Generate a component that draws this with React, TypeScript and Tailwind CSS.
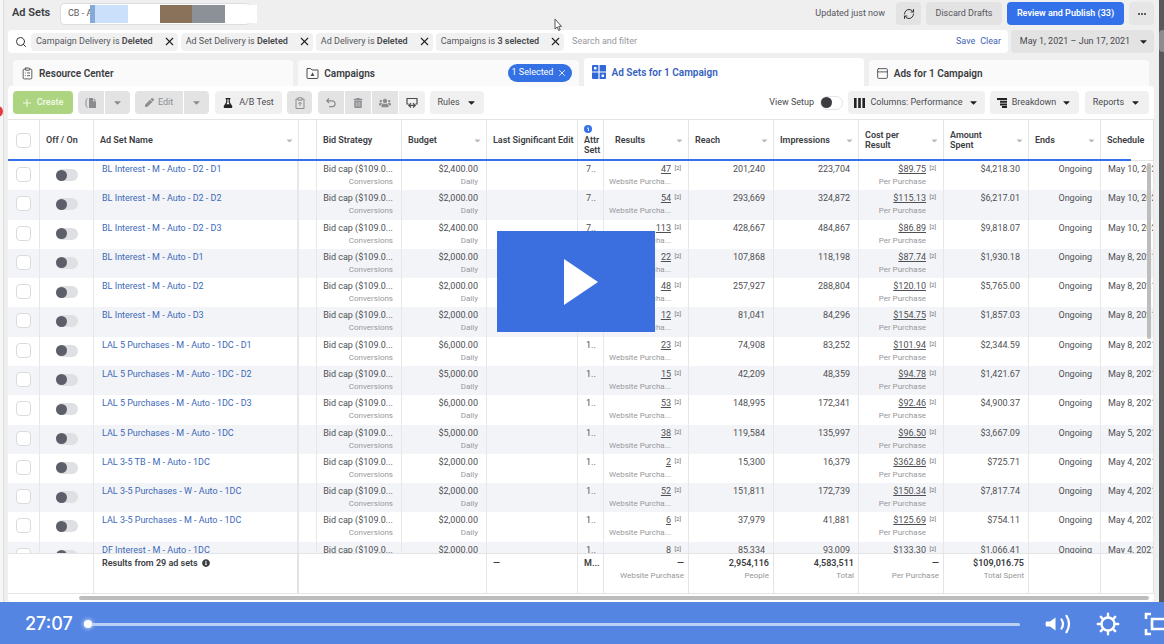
import { useState } from "react"
import type { ReactNode } from "react"
import { ClipboardList, PanelTop, RefreshCw, Search, X } from "lucide-react"
import { FaCaretDown, FaFlask, FaInfoCircle, FaPen, FaTrashAlt, FaUsers } from "react-icons/fa"

type Row = {
  name: string
  budget: string
  attr: string
  results: string
  reach: string
  impressions: string
  cost: string
  spent: string
  schedule: string
}

const rows: Row[] = [
  { name: "BL Interest - M - Auto - D2 - D1", budget: "$2,400.00", attr: "7..", results: "47", reach: "201,240", impressions: "223,704", cost: "$89.75", spent: "$4,218.30", schedule: "May 10, 2021" },
  { name: "BL Interest - M - Auto - D2 - D2", budget: "$2,000.00", attr: "7..", results: "54", reach: "293,669", impressions: "324,872", cost: "$115.13", spent: "$6,217.01", schedule: "May 10, 2021" },
  { name: "BL Interest - M - Auto - D2 - D3", budget: "$2,400.00", attr: "7..", results: "113", reach: "428,667", impressions: "484,867", cost: "$86.89", spent: "$9,818.07", schedule: "May 10, 2021" },
  { name: "BL Interest - M - Auto - D1", budget: "$2,000.00", attr: "7..", results: "22", reach: "107,868", impressions: "118,198", cost: "$87.74", spent: "$1,930.18", schedule: "May 8, 2021" },
  { name: "BL Interest - M - Auto - D2", budget: "$2,000.00", attr: "7..", results: "48", reach: "257,927", impressions: "288,804", cost: "$120.10", spent: "$5,765.00", schedule: "May 8, 2021" },
  { name: "BL Interest - M - Auto - D3", budget: "$2,000.00", attr: "7..", results: "12", reach: "81,041", impressions: "84,296", cost: "$154.75", spent: "$1,857.03", schedule: "May 8, 2021" },
  { name: "LAL 5 Purchases - M - Auto - 1DC - D1", budget: "$6,000.00", attr: "1..", results: "23", reach: "74,908", impressions: "83,252", cost: "$101.94", spent: "$2,344.59", schedule: "May 8, 2021" },
  { name: "LAL 5 Purchases - M - Auto - 1DC - D2", budget: "$5,000.00", attr: "1..", results: "15", reach: "42,209", impressions: "48,359", cost: "$94.78", spent: "$1,421.67", schedule: "May 8, 2021" },
  { name: "LAL 5 Purchases - M - Auto - 1DC - D3", budget: "$6,000.00", attr: "1..", results: "53", reach: "148,995", impressions: "172,341", cost: "$92.46", spent: "$4,900.37", schedule: "May 8, 2021" },
  { name: "LAL 5 Purchases - M - Auto - 1DC", budget: "$5,000.00", attr: "1..", results: "38", reach: "119,584", impressions: "135,997", cost: "$96.50", spent: "$3,667.09", schedule: "May 5, 2021" },
  { name: "LAL 3-5 TB - M - Auto - 1DC", budget: "$2,000.00", attr: "1..", results: "2", reach: "15,300", impressions: "16,379", cost: "$362.86", spent: "$725.71", schedule: "May 4, 2021" },
  { name: "LAL 3-5 Purchases - W - Auto - 1DC", budget: "$2,000.00", attr: "1..", results: "52", reach: "151,811", impressions: "172,739", cost: "$150.34", spent: "$7,817.74", schedule: "May 4, 2021" },
  { name: "LAL 3-5 Purchases - M - Auto - 1DC", budget: "$2,000.00", attr: "1..", results: "6", reach: "37,979", impressions: "41,881", cost: "$125.69", spent: "$754.11", schedule: "May 4, 2021" },
  { name: "DF Interest - M - Auto - 1DC", budget: "$2,000.00", attr: "1..", results: "8", reach: "85,334", impressions: "93,009", cost: "$133.30", spent: "$1,066.41", schedule: "May 4, 2021" },
]

const chips = [
  { label: "Campaign Delivery is", value: "Deleted" },
  { label: "Ad Set Delivery is", value: "Deleted" },
  { label: "Ad Delivery is", value: "Deleted" },
  { label: "Campaigns is", value: "3 selected" },
]

const btn = "flex h-[23px] items-center justify-center bg-[#f0f0f1] text-[#4b4c4f]"
const btnOff = "flex h-[23px] items-center justify-center bg-[#e3e3e4] text-[#8b8c8f]"

function TopBar() {
  return (
    <header className="flex h-[26px] items-center pt-px">
      <h1 className="ml-1 w-12 text-[11px] font-semibold text-[#3b3c3f]">Ad Sets</h1>
      <button className="flex h-[22px] w-[190px] items-center rounded border border-[#dcdde0] bg-white pl-[7px]">
        <span className="w-[22px] shrink-0 overflow-hidden whitespace-nowrap text-left text-[9px] text-[#5c5d60]">CB - A</span>
        <span className="flex h-[18px] shrink-0">
          <span className="w-[5px] bg-[#85aad8]" />
          <span className="w-[33px] bg-[#cbe1fb]" />
          <span className="w-8 bg-white" />
          <span className="w-8 bg-[#8a7159]" />
          <span className="w-[33px] bg-[#8c9197]" />
          <span className="w-8 bg-white" />
        </span>
      </button>
      <div className="ml-auto flex items-center gap-[5px] text-[9px]">
        <span className="mr-1.5 text-[#55565a]">Updated just now</span>
        <button aria-label="Refresh" className="flex h-[23px] w-[25px] items-center justify-center rounded bg-[#e3e3e4] text-[#333]">
          <RefreshCw size={12} />
        </button>
        <button className="h-[23px] w-[76px] rounded bg-[#e3e3e4] text-[#55565a]">Discard Drafts</button>
        <button className="h-[23px] w-[117px] rounded bg-[#3371eb] font-semibold text-white">
          Review and Publish (33)
        </button>
        <button aria-label="More" className="flex h-[23px] w-[25px] items-center justify-center gap-px rounded bg-[#e6e6e7]">
          <span className="size-0.5 rounded-full bg-[#333]" />
          <span className="size-0.5 rounded-full bg-[#333]" />
          <span className="size-0.5 rounded-full bg-[#333]" />
        </button>
      </div>
    </header>
  )
}

function FilterBar() {
  return (
    <div className="mt-1 flex gap-[3px]">
      <div className="flex h-[23px] flex-1 items-center rounded bg-white">
        <Search size={12} className="ml-[7px] mr-1 text-[#333]" />
        <div className="flex gap-[3px]">
          {chips.map((chip) => (
            <span key={chip.label} className="flex h-[18px] items-center rounded bg-[#f1f1f2] pl-[5px] pr-0.5 text-[9px] text-[#55565a]">
              <span className="whitespace-nowrap">
                {chip.label} <b className="font-semibold text-[#47484b]">{chip.value}</b>
              </span>
              <button aria-label={`Remove ${chip.label}`} className="ml-2.5 text-[#222]">
                <X size={13} />
              </button>
            </span>
          ))}
        </div>
        <input
          aria-label="Search and filter"
          placeholder="Search and filter"
          className="ml-2 min-w-0 flex-1 text-[9px] outline-none placeholder:text-[#97989b]"
        />
        <button className="text-[9px] text-[#3f63b5]">Save</button>
        <button className="ml-[5px] mr-[7px] text-[9px] text-[#3f63b5]">Clear</button>
      </div>
      <button className="flex h-[23px] w-[143px] items-center justify-center gap-2 rounded bg-[#e3e3e4] pl-1 text-[9px] text-[#47484b]">
        May 1, 2021 – Jun 17, 2021
        <FaCaretDown size={11} className="text-[#222]" />
      </button>
    </div>
  )
}

function Tabs() {
  const tab = "flex h-[26px] flex-1 items-center rounded-t bg-[#fafafa] text-[10px] font-semibold text-[#3b3c3f]"
  return (
    <nav className="mt-[5px] flex items-end gap-[5px] px-[5px]">
      <a href="#resources" className={tab}>
        <ClipboardList size={13} strokeWidth={1.5} className="ml-2 mr-[5px]" />
        Resource Center
      </a>
      <div className={tab}>
        <a href="#campaigns" className="flex items-center">
          <svg viewBox="0 0 13 12" className="ml-2 mr-[5px] h-3 w-[13px]" fill="none" stroke="#4b4c4f">
            <path d="M1 10.5V1.5h3.6L6 3h6v7.5a1 1 0 0 1-1 1H2a1 1 0 0 1-1-1z" />
            <path d="M6.5 5.2 8.4 9H4.6z" fill="#4b4c4f" stroke="none" />
          </svg>
          Campaigns
        </a>
        <button className="ml-auto mr-[7px] flex h-[18px] w-16 items-center justify-center gap-1 rounded-full bg-[#3371e4] text-[9px] font-normal text-white">
          1 Selected
          <X size={10} />
        </button>
      </div>
      <a href="#adsets" className="flex h-7 flex-1 items-center rounded-t bg-white text-[10px] font-semibold text-[#3562bd]">
        <svg viewBox="0 0 14 14" className="ml-2 mr-[6px] size-[14px]" fill="#3068d8">
          <path fillRule="evenodd" d="M1 0h5.4v6.4H0V1a1 1 0 0 1 1-1zm1 2v2.5h2.5V2zM7.6 0H13a1 1 0 0 1 1 1v5.4H7.6zM0 7.6h6.4V14H1a1 1 0 0 1-1-1zM7.6 7.6H14V13a1 1 0 0 1-1 1H7.6zm2 2v2.5h2.5V9.6z" />
        </svg>
        Ad Sets for 1 Campaign
      </a>
      <a href="#ads" className={tab}>
        <PanelTop size={13} strokeWidth={1.5} className="ml-[7px] mr-[5px]" />
        Ads for 1 Campaign
      </a>
    </nav>
  )
}

function Toolbar() {
  const [viewSetup, setViewSetup] = useState(false)
  return (
    <div className="flex h-[33px] items-center rounded-t bg-white px-[5px] text-[9px]">
      <button className="flex h-[23px] w-[60px] items-center justify-center gap-1.5 rounded bg-[#add581] font-semibold text-[#eef8e2]">
        <svg viewBox="0 0 8 8" className="size-2" stroke="currentColor">
          <path d="M4 0v8M0 4h8" />
        </svg>
        Create
      </button>
      <div className="ml-[5px] flex gap-px">
        <button aria-label="Duplicate" className={`${btnOff} w-[26px] rounded-l`}>
          <svg viewBox="0 0 12 12" className="size-3" fill="currentColor">
            <path d="M4 1h4v3.2h3V11H4zM8.8 1 11 3.4H8.8z" />
            <path d="M2.6 1.5Q1 2 1 4v4q0 2 1.6 2.5" fill="none" stroke="currentColor" />
          </svg>
        </button>
        <button aria-label="Duplicate options" className={`${btnOff} w-[25px] rounded-r`}>
          <FaCaretDown size={11} />
        </button>
      </div>
      <div className="ml-[5px] flex gap-px">
        <button className={`${btnOff} w-12 gap-1 rounded-l`}>
          <FaPen size={9} />
          Edit
        </button>
        <button aria-label="Edit options" className={`${btnOff} w-[25px] rounded-r`}>
          <FaCaretDown size={11} />
        </button>
      </div>
      <button className={`${btn} ml-1.5 w-[67px] gap-1.5 rounded`}>
        <FaFlask size={10} className="text-[#222]" />
        A/B Test
      </button>
      <button aria-label="Paste" className={`${btnOff} ml-[5px] w-[25px] rounded`}>
        <svg viewBox="0 0 12 12" className="size-3" fill="none" stroke="currentColor">
          <path d="M4 2H2v9.5h8V2H8M4 .8h4v2.4H4zM6 9V5.5M4.5 6.8 6 5.2l1.5 1.6" />
        </svg>
      </button>
      <div className="ml-1.5 flex gap-px">
        <button aria-label="Undo" className={`${btnOff} w-[26px] rounded-l`}>
          <svg viewBox="0 0 12 12" className="size-3" fill="none" stroke="currentColor" strokeWidth="1.2">
            <path d="M4 1.5 1.8 3.8 4 6M2 3.8h5.2a2.9 2.9 0 0 1 0 5.8H4" />
          </svg>
        </button>
        <button aria-label="Delete" className={`${btnOff} w-[26px]`}>
          <FaTrashAlt size={10} />
        </button>
        <button aria-label="Audience" className={`${btnOff} w-[26px]`}>
          <FaUsers size={12} />
        </button>
        <button aria-label="Export" className={`${btn} w-[26px] rounded-r`}>
          <svg viewBox="0 0 12 12" className="size-3" fill="none" stroke="currentColor" strokeWidth="1.2">
            <path d="M2.6 7H1V1.5h10V7H9.4M3.2 8.4h5.6M5 6.2 2.8 8.4 5 10.6M7 6.2l2.2 2.2L7 10.6" />
          </svg>
        </button>
      </div>
      <button className={`${btn} ml-[5px] w-[54px] gap-1.5 rounded`}>
        Rules
        <FaCaretDown size={11} className="text-[#222]" />
      </button>

      <label className="ml-auto flex items-center gap-1.5 text-[#47484b]">
        View Setup
        <input type="checkbox" className="peer sr-only" checked={viewSetup} onChange={() => setViewSetup(!viewSetup)} />
        <span className="flex h-[14px] w-[23px] items-center rounded-full border border-[#e4e4e6] peer-checked:justify-end">
          <span className="size-[11px] rounded-full bg-[#3b3c3f]" />
        </span>
      </label>
      <button className={`${btn} ml-[5px] w-[137px] gap-[5px] rounded`}>
        <svg viewBox="0 0 11 10" className="h-2.5 w-[11px]" fill="#222">
          <path d="M0 0h2.6v10H0zM4.2 0h2.6v10H4.2zM8.4 0H11v10H8.4z" />
        </svg>
        Columns: Performance
        <FaCaretDown size={11} className="text-[#222]" />
      </button>
      <button className={`${btn} ml-[5px] w-[89px] gap-[5px] rounded`}>
        <svg viewBox="0 0 10 10" className="size-2.5" fill="#222">
          <path d="M0 0h10v2H0zM3 2.7h7v2H3zM3 5.4h7v2H3zM5 8h5v2H5z" />
        </svg>
        Breakdown
        <FaCaretDown size={11} className="text-[#222]" />
      </button>
      <button className={`${btn} ml-1.5 w-16 gap-1.5 rounded`}>
        Reports
        <FaCaretDown size={11} className="text-[#222]" />
      </button>
    </div>
  )
}

function Head({ children, sort, className = "px-1.5" }: { children?: ReactNode; sort?: boolean; className?: string }) {
  return (
    <th scope="col" className={`h-[42px] overflow-hidden border-y border-r border-[#e3e4e6] bg-white text-left font-semibold leading-[10px] ${className}`}>
      <div className="flex items-center justify-between">
        <span>{children}</span>
        {sort && <FaCaretDown size={9} className="-mr-0.5 shrink-0 text-[#b5b6b9]" />}
      </div>
    </th>
  )
}

const cell = "overflow-hidden whitespace-nowrap border-r border-[#e6e7e9] p-0 align-top leading-3 pt-0.5"

function Stack({ top, sub, className = "pr-2" }: { top: string; sub?: string; className?: string }) {
  return (
    <td className={`${cell} ${className} text-right`}>
      {top}
      {sub && <div className="mt-px text-[8px] text-[#97989b]">{sub}</div>}
    </td>
  )
}

// value with a footnote mark hanging to the right of it
function LinkedStack({ top, sub }: { top: string; sub: string }) {
  return (
    <td className={`${cell} text-right`}>
      <div className="flex justify-end gap-0.5 pr-[7px]">
        <a href="#result" className="underline">{top}</a>
        <span className="w-2 text-[6px] leading-[10px] text-[#66676a]">[2]</span>
      </div>
      <div className="mt-px pr-[17px] text-[8px] text-[#97989b]">{sub}</div>
    </td>
  )
}

const foot = "h-[41px] overflow-hidden whitespace-nowrap border-y border-r border-[#e3e4e6] bg-white pt-[3px] align-top font-semibold leading-3"

function Sub({ children }: { children: ReactNode }) {
  return <div className="mt-px text-[8px] font-normal text-[#97989b]">{children}</div>
}

function AdSetTable() {
  return (
    <table className="h-[493px] w-full table-fixed border-separate border-spacing-0 text-[9px] text-[#4f5054]">
      <colgroup>
        <col className="w-8" />
        <col className="w-[54px]" />
        <col className="w-[205px]" />
        <col className="w-[18px]" />
        <col className="w-[85px]" />
        <col className="w-[85px]" />
        <col className="w-[91px]" />
        <col className="w-[26px]" />
        <col className="w-[85px]" />
        <col className="w-[85px]" />
        <col className="w-[85px]" />
        <col className="w-[85px]" />
        <col className="w-[85px]" />
        <col className="w-[72px]" />
        <col />
      </colgroup>
      <thead className="sticky top-0 z-10 text-[#3b3c3f]">
        <tr>
          <Head className="pl-2">
            <input type="checkbox" aria-label="Select all" className="block size-[15px] appearance-none rounded border border-[#dadbdd] bg-white" />
          </Head>
          <Head>Off / On</Head>
          <Head sort>Ad Set Name</Head>
          <Head />
          <Head>Bid Strategy</Head>
          <Head sort>Budget</Head>
          <Head className="whitespace-nowrap pl-1.5">Last Significant Edit</Head>
          <Head className="pl-1.5">
            <svg viewBox="0 0 8 8" className="mb-0.5 size-2">
              <circle cx="4" cy="4" r="4" fill="#3371eb" />
              <path d="M3.4 3.5h1V6M4 1.8v.8" stroke="#fff" />
            </svg>
            Attr Sett
          </Head>
          <Head sort className="pl-[11px] pr-1.5">Results</Head>
          <Head sort>Reach</Head>
          <Head sort>Impressions</Head>
          <Head sort>Cost per<br />Result</Head>
          <Head sort>Amount<br />Spent</Head>
          <Head sort>Ends</Head>
          <Head>Schedule</Head>
        </tr>
      </thead>
      <tbody>
        {rows.map((row) => (
          <tr key={row.name} className="even:bg-[#f3f4f7]">
            <td className={`${cell} pl-2`}>
              <input type="checkbox" aria-label={`Select ${row.name}`} className="mt-1 block size-[15px] appearance-none rounded border border-[#dadbdd] bg-white" />
            </td>
            <td className={`${cell} pl-4`}>
              <button role="switch" aria-checked="false" aria-label={`Turn on ${row.name}`} className="mt-1.5 flex h-3 w-[22px] items-center rounded-full bg-[#dfe0e3]">
                <span className="size-[11px] rounded-full bg-[#5c5e69]" />
              </button>
            </td>
            <td className={`${cell} border-r-2 pl-2`}>
              <a href="#adset" className="text-[#3c69b8]">{row.name}</a>
            </td>
            <td className={cell} />
            <Stack top="Bid cap ($109.0..." sub="Conversions" />
            <Stack top={row.budget} sub="Daily" />
            <td className={cell} />
            <td className={`${cell} pl-2`}>{row.attr}</td>
            <LinkedStack top={row.results} sub="Website Purcha..." />
            <Stack top={row.reach} />
            <Stack top={row.impressions} />
            <LinkedStack top={row.cost} sub="Per Purchase" />
            <Stack top={row.spent} />
            <Stack top="Ongoing" />
            <td className={`${cell} pl-[7px]`}>{row.schedule}</td>
          </tr>
        ))}
      </tbody>
      <tfoot className="sticky bottom-0 z-10 text-right text-[#3b3c3f]">
        <tr>
          <td className={foot} colSpan={2} />
          <td className={`${foot} border-r-2 pl-2 text-left`}>
            <span className="flex items-center gap-1">
              Results from 29 ad sets
              <FaInfoCircle size={8} />
            </span>
          </td>
          <td className={foot} colSpan={3} />
          <td className={`${foot} pl-1.5 text-left`}>—</td>
          <td className={`${foot} pl-1.5 text-left`}>M...</td>
          <td className={`${foot} pr-1`}>—<Sub>Website Purchase</Sub></td>
          <td className={`${foot} pr-1`}>2,954,116<Sub>People</Sub></td>
          <td className={`${foot} pr-1`}>4,583,511<Sub>Total</Sub></td>
          <td className={`${foot} pr-1`}>—<Sub>Per Purchase</Sub></td>
          <td className={`${foot} pr-1`}>$109,016.75<Sub>Total Spent</Sub></td>
          <td className={foot} />
          <td className={foot} />
        </tr>
      </tfoot>
    </table>
  )
}

function PlayerBar() {
  return (
    <div className="flex h-[42px] shrink-0 items-center bg-[#5585e3] pl-[25px] pt-0.5 text-white">
      <span className="w-[59px] font-[Inter,sans-serif] text-lg font-medium">27:07</span>
      <div className="flex flex-1 items-center">
        <span className="size-2 rounded-full bg-white shadow-[0_0_4px_#fff]" />
        <span className="h-[3px] flex-1 rounded-r bg-[#bcd0f6]" />
      </div>
      <button aria-label="Volume" className="ml-6">
        <svg viewBox="0 0 28 22" className="h-[22px] w-7" fill="none" stroke="#fff" strokeWidth="2.2" strokeLinecap="round">
          <path d="M2 8.5q-1 2.5 0 5h4l5.5 4V4.5L6 8.5z" fill="#fff" stroke="none" />
          <path d="M17.5 6.5q3 4.500 0 9M22.500 2.800q5 8.200 0 16.400" />
        </svg>
      </button>
      <button aria-label="Settings" className="ml-6">
        <svg viewBox="0 0 24 24" className="size-6" fill="none" stroke="#fff" strokeWidth="2.4" strokeLinecap="round">
          <circle cx="12" cy="12" r="6.5" />
          <path d="M12 1.800v3M12 19.200v3M1.800 12h3M19.200 12h3M4.800 4.800l2 2M17.200 17.200l2 2M4.800 19.200l2-2M17.200 6.800l2-2" />
        </svg>
      </button>
      <button aria-label="Fullscreen" className="ml-6 w-5 overflow-hidden">
        <svg viewBox="0 0 30 24" className="h-6 w-[30px]" fill="none" stroke="#fff" strokeWidth="2.6">
          <path d="M7 2H2v5M2 17v5h5M23 2h5v5M28 17v5h-5M8 7h14v10H8z" />
        </svg>
      </button>
    </div>
  )
}

export default function App() {
  return (
    <div className="relative flex h-screen flex-col overflow-hidden bg-[#efeff0] font-[Roboto,sans-serif]">
      <div className="flex min-h-0 flex-1">
        <div className="w-1 shrink-0 border-r border-[#dcdcdd] bg-[#f6f6f6]" />
        <main className="flex min-w-0 flex-1 flex-col pl-1 pr-[5px]">
          <TopBar />
          <FilterBar />
          <Tabs />
          <Toolbar />
          <div className="relative flex min-h-0 flex-1 flex-col rounded-b bg-white">
            <div className="min-h-0 flex-1 overflow-hidden">
              <AdSetTable />
            </div>
            <div className="flex h-2 items-center pl-[71px] pr-[5px]">
              <span className="h-1 flex-1 rounded-full bg-[#bdbdbe]" />
            </div>
            {/* loading progress under the header row */}
            <span className="absolute left-0 right-[23px] top-10 z-20 h-0.5 bg-[#3371eb]" />
            <span className="absolute right-[3px] top-11 z-20 h-[176px] w-1 rounded-full bg-[#bdbdbe]" />
          </div>
        </main>
        <div className="w-[5px] shrink-0 bg-[#58595b] pt-[30px]">
          <div className="h-[22px] rounded-l bg-[#8b8c8e]" />
        </div>
      </div>
      <PlayerBar />
      <span className="absolute -left-2 top-[106px] size-[11px] rounded-full bg-[#e5393b]" />
      <svg viewBox="0 0 8 14" className="absolute left-[554px] top-[18px] h-[14px] w-2" fill="#fff" stroke="#555">
        <path d="M1 1v10l2.2-2 1.6 3.5 1.4-.7L4.7 8.4h2.8z" />
      </svg>
      <button aria-label="Play video" className="absolute left-1/2 top-[231px] z-30 flex h-[101px] w-[158px] -translate-x-[85px] items-center justify-center bg-[#3b6fe0]">
        <svg viewBox="0 0 34 46" className="ml-2.5 h-[46px] w-[34px]" fill="#fff">
          <path d="M0 0 34 23 0 46z" />
        </svg>
      </button>
    </div>
  )
}
